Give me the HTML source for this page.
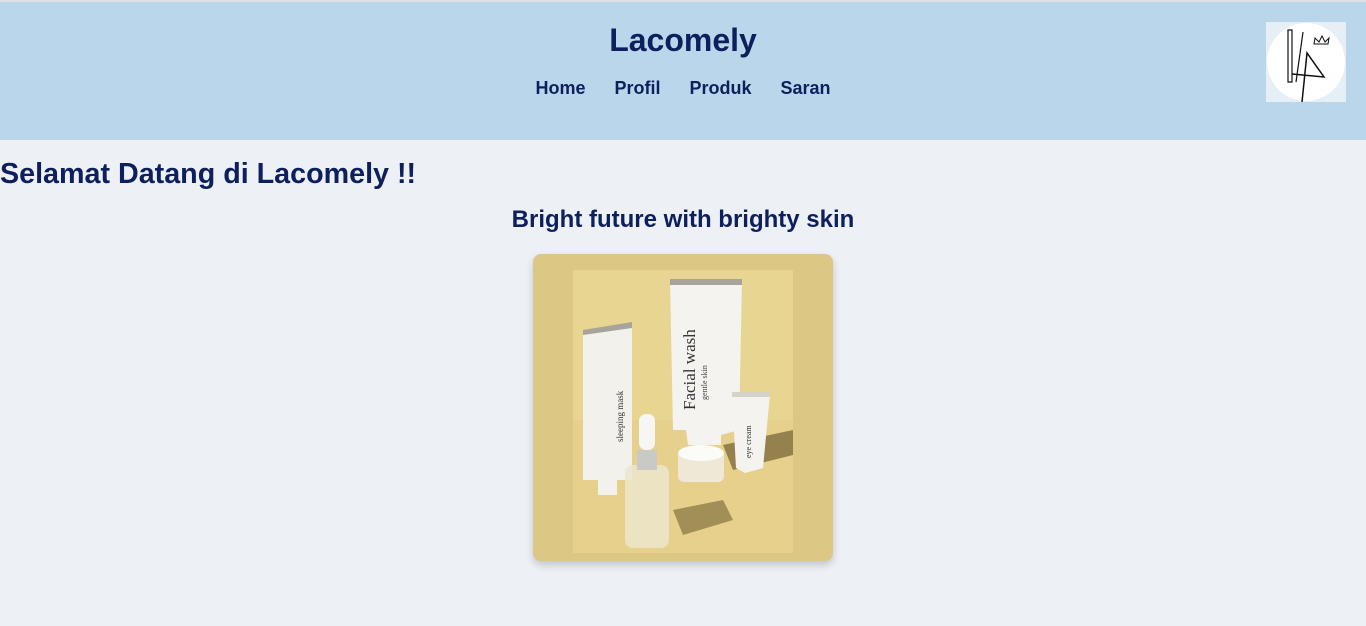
<!DOCTYPE html>
<html><head><meta charset="utf-8"><style>
*{margin:0;padding:0;box-sizing:border-box}
body{width:1366px;height:626px;background:#edf0f5;font-family:"Liberation Sans",Arial,sans-serif;color:#0d1f5c;overflow:hidden;position:relative}
.top{height:2px;background:#dcdfe3}
header{height:138px;background:#bad6eb;position:relative;text-align:center}
header h1{position:absolute;top:20px;left:0;right:0;font-size:32px;font-weight:bold}
nav{position:absolute;top:76px;left:0;right:0;font-size:18px;font-weight:bold}
nav span{margin:0 14.5px}
.logo{position:absolute;left:1266px;top:20px;width:80px;height:80px;background:#e6eef6}
h2{position:absolute;left:0;top:158px;font-size:28.7px;font-weight:bold}
h3{position:absolute;left:0;right:0;top:206px;text-align:center;font-size:24px;font-weight:bold}
.card{position:absolute;left:533px;top:254px;width:300px;height:307px;background:#dcc784;border-radius:8px;box-shadow:0 4px 8px rgba(0,0,0,.18)}
.photo{position:absolute;left:40px;top:16px;width:220px;height:283px}
</style></head><body>
<div class="top"></div>
<header>
<h1>Lacomely</h1>
<nav><span>Home</span><span>Profil</span><span>Produk</span><span>Saran</span></nav>
<div class="logo"><svg width="80" height="80" viewBox="0 0 80 80">
<circle cx="40" cy="40" r="39" fill="#fff"/>
<path d="M22 8 L26 8 L26 60 L22 60 Z" fill="none" stroke="#111" stroke-width="1.2"/>
<path d="M26 52 L58 55 L41 31 L36 80" fill="none" stroke="#111" stroke-width="1.5"/>
<path d="M30 60 L37 10" fill="none" stroke="#111" stroke-width="1.2"/>
<path d="M48 22 L49 16 L53 20 L56 14 L59 20 L63 16 L62 22 Z" fill="none" stroke="#111" stroke-width="1"/>
</svg></div>
</header>
<h2>Selamat Datang di Lacomely !!</h2>
<h3>Bright future with brighty skin</h3>
<div class="card">
<svg class="photo" viewBox="0 0 220 283">
<rect width="220" height="283" fill="#e6d08c"/>
<rect width="220" height="150" fill="#ecd997" opacity=".5"/>
<path d="M150 175 L220 160 L220 185 L160 200Z" fill="#5e4d24" opacity=".6"/>
<path d="M100 240 L150 230 L160 250 L110 265Z" fill="#5e4d24" opacity=".5"/>
<path d="M10 62 L59 53 L59 210 L44 210 L44 225 L25 225 L25 210 L10 210Z" fill="#f2f1ec"/>
<path d="M10 60 L59 52 L59 58 L10 65Z" fill="#a9a499"/>
<path d="M97 11 L169 9 L166 160 L148 165 L148 175 L115 175 L113 160 L100 160Z" fill="#f4f3ef"/>
<rect x="97" y="9" width="72" height="6" fill="#a9a499"/>
<path d="M159 125 L197 124 L190 198 L172 203 L163 198Z" fill="#f4f3ef"/>
<rect x="159" y="122" width="38" height="5" fill="#d5d2c8"/>
<rect x="105" y="180" width="46" height="32" rx="6" fill="#efe8d6"/>
<ellipse cx="128" cy="183" rx="23" ry="8" fill="#fbfbf8"/>
<rect x="52" y="195" width="44" height="83" rx="8" fill="#ece6cc" opacity=".85"/>
<rect x="64" y="180" width="20" height="20" fill="#c9c9c6"/>
<rect x="66" y="144" width="16" height="36" rx="7" fill="#f6f6f4"/>
<text transform="translate(122 140) rotate(-90)" font-family="Liberation Serif,serif" font-size="17" fill="#333">Facial wash</text>
<text transform="translate(134 130) rotate(-90)" font-family="Liberation Serif,serif" font-size="8" fill="#444">gentle skin</text>
<text transform="translate(50 172) rotate(-90)" font-family="Liberation Serif,serif" font-size="9" fill="#333">sleeping mask</text>
<text transform="translate(178 188) rotate(-90)" font-family="Liberation Serif,serif" font-size="8" fill="#333">eye cream</text>
</svg>
</div>
</body></html>
